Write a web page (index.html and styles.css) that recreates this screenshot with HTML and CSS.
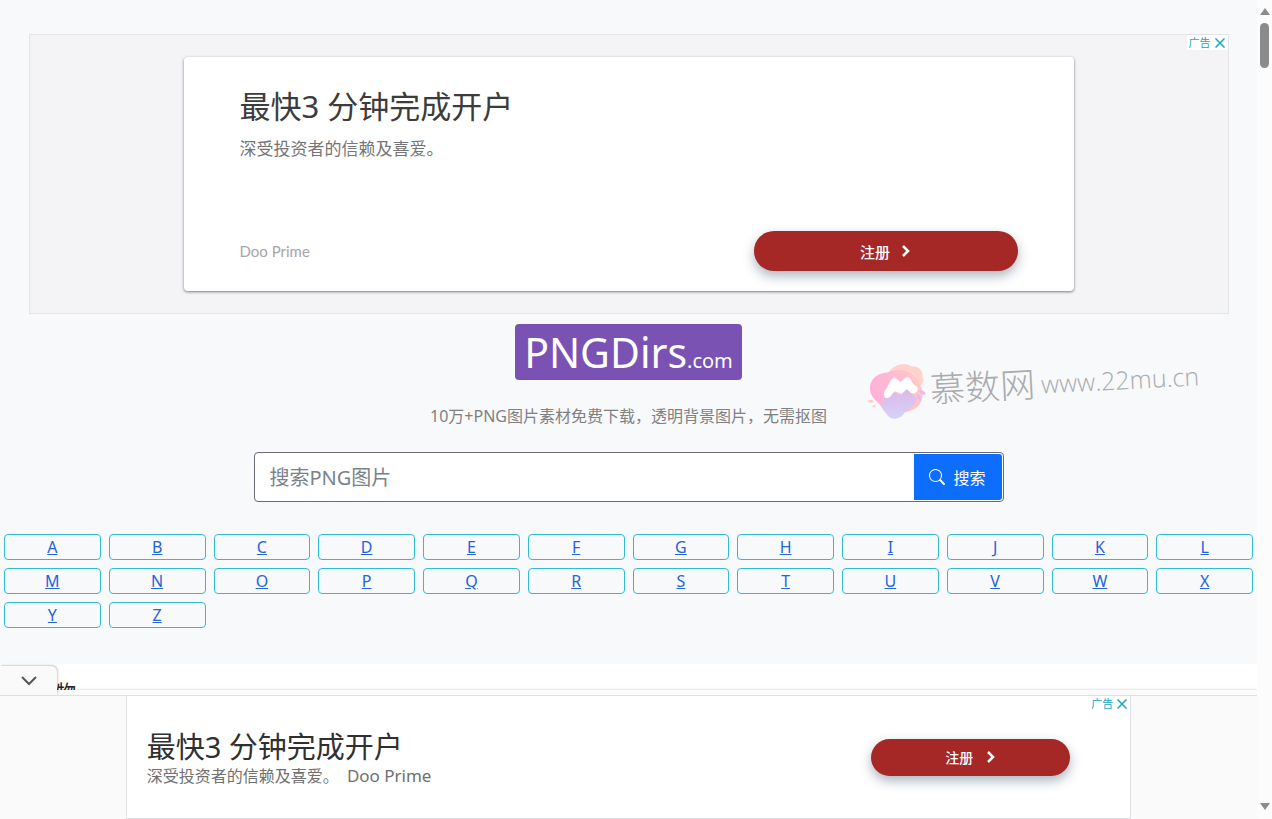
FILE: index.html
```html
<!DOCTYPE html>
<html lang="zh-CN">

<head>
  <meta charset="UTF-8" />
  <meta name="viewport" content="width=device-width, initial-scale=1.0" />
  <title>PNGDirs.com</title>
  <link rel="stylesheet" href="styles.css">
</head>

<body>
  <div class="page">
    <main class="hero">
      <section class="ad">
        <div class="ad-mark">
          <a href="#">广告</a>
          <button class="ad-close" type="button" aria-label="关闭">
            <svg viewBox="0 0 10 10" width="10" height="10"><path d="M.5 .5l9 9M9.5 .5l-9 9" /></svg>
          </button>
        </div>
        <div class="ad-card">
          <h2 class="ad-title">最快3 分钟完成开户</h2>
          <p class="ad-text">深受投资者的信赖及喜爱。</p>
          <div class="ad-foot">
            <span class="ad-brand">Doo Prime</span>
            <button class="cta" type="button">注册
              <svg viewBox="0 0 10 12" width="10" height="12"><path d="M2 1l5 5-5 5" /></svg>
            </button>
          </div>
        </div>
      </section>

      <h1 class="logo">PNGDirs<small>.com</small></h1>
      <p class="tagline">10万+PNG图片素材免费下载，透明背景图片，无需抠图</p>

      <form class="search">
        <input class="search-input" type="text" placeholder="搜索PNG图片" aria-label="搜索PNG图片">
        <button class="search-button" type="submit">
          <svg viewBox="0 0 16 16" width="16" height="16" fill="currentColor">
            <path d="M11.742 10.344a6.5 6.5 0 1 0-1.397 1.398h-.001c.03.04.062.078.098.115l3.85 3.85a1 1 0 0 0 1.415-1.414l-3.85-3.85a1.007 1.007 0 0 0-.115-.1zM12 6.5a5.5 5.5 0 1 1-11 0 5.5 5.5 0 0 1 11 0z" />
          </svg>
          搜索
        </button>
      </form>

      <nav class="letters">
        <div class="letter"><a href="#">A</a></div>
        <div class="letter"><a href="#">B</a></div>
        <div class="letter"><a href="#">C</a></div>
        <div class="letter"><a href="#">D</a></div>
        <div class="letter"><a href="#">E</a></div>
        <div class="letter"><a href="#">F</a></div>
        <div class="letter"><a href="#">G</a></div>
        <div class="letter"><a href="#">H</a></div>
        <div class="letter"><a href="#">I</a></div>
        <div class="letter"><a href="#">J</a></div>
        <div class="letter"><a href="#">K</a></div>
        <div class="letter"><a href="#">L</a></div>
        <div class="letter"><a href="#">M</a></div>
        <div class="letter"><a href="#">N</a></div>
        <div class="letter"><a href="#">O</a></div>
        <div class="letter"><a href="#">P</a></div>
        <div class="letter"><a href="#">Q</a></div>
        <div class="letter"><a href="#">R</a></div>
        <div class="letter"><a href="#">S</a></div>
        <div class="letter"><a href="#">T</a></div>
        <div class="letter"><a href="#">U</a></div>
        <div class="letter"><a href="#">V</a></div>
        <div class="letter"><a href="#">W</a></div>
        <div class="letter"><a href="#">X</a></div>
        <div class="letter"><a href="#">Y</a></div>
        <div class="letter"><a href="#">Z</a></div>
      </nav>

      <div class="watermark">
        <svg viewBox="0 0 60 56" width="60" height="56">
          <defs>
            <linearGradient id="blob" x1="0" y1="0" x2="1" y2="0">
              <stop offset="0" stop-color="#ffb0da" />
              <stop offset="1" stop-color="#ffc9c6" />
            </linearGradient>
            <linearGradient id="wave" x1="0" y1="0" x2="0" y2="1">
              <stop offset="0" stop-color="#dcb8e6" />
              <stop offset="1" stop-color="#d5d2fa" />
            </linearGradient>
          </defs>
          <path fill="#ffd3cc" d="M24 8C30 1 41-1 46 4c8 0 12 5 11 11 2 6-1 9-5 9L24 18z" />
          <path fill="url(#blob)" d="M5 30C1 18 10 9 22 9c10-4 22-2 27 6 9 8 10 23 1 30-8 6-28 8-34 1-2-6-8-9-11-16z" />
          <path fill="url(#wave)" d="M18 34l8-6 6 4 8-6 10 10c-1 8-7 8-12 13-5 8-15 9-19 1-4-4-6-11-1-16z" />
          <path fill="#fff" d="M19 34c-3-3-1-6 2-10 3-5 6-11 9-9l5 4 5-4c5-2 5 4 9 8 5 3 2 7-1 8-5 1-5-5-8-4l-5 4-6-3c-4 2-5 8-10 6z" />
          <path fill="#eeb8ed" d="M53 28c4 0 7 3 6 5-3 0-6-2-6-5zM51 32c3 1 4 4 3 7-3-1-5-4-3-7z" />
          <path fill="#ffccc4" d="M1 36c3-1 6 0 6 1-1 2-5 2-6-1zM5 42l4-2c0 3-3 4-4 2z" />
        </svg>
        <span class="watermark-name">慕数网</span>
        <span class="watermark-url">www.22mu.cn</span>
      </div>
    </main>

    <section class="category">
      <h3>物</h3>
    </section>

    <aside class="dock">
      <button class="dock-toggle" type="button" aria-label="收起">
        <svg viewBox="0 0 16 10" width="16" height="10"><path d="M1 1l7 7 7-7" /></svg>
      </button>
      <div class="dock-ad">
        <div class="ad-mark">
          <a href="#">广告</a>
          <button class="ad-close" type="button" aria-label="关闭">
            <svg viewBox="0 0 10 10" width="10" height="10"><path d="M.5 .5l9 9M9.5 .5l-9 9" /></svg>
          </button>
        </div>
        <div>
          <h2 class="dock-title">最快3 分钟完成开户</h2>
          <p class="dock-text">深受投资者的信赖及喜爱。 <span>Doo Prime</span></p>
        </div>
        <button class="cta cta-small" type="button">注册
          <svg viewBox="0 0 10 12" width="10" height="12"><path d="M2 1l5 5-5 5" /></svg>
        </button>
      </div>
    </aside>
  </div>

  <div class="scrollbar">
    <svg viewBox="0 0 10 8" width="10" height="8"><path d="M5 0l5 7H0z" /></svg>
    <div class="scrollbar-thumb"></div>
    <svg class="scrollbar-down" viewBox="0 0 10 8" width="10" height="8"><path d="M0 0h10L5 7z" /></svg>
  </div>
</body>

</html>
```

FILE: styles.css
```css
* {
  box-sizing: border-box;
}

body {
  margin: 0;
  height: 100vh;
  overflow: hidden;
  display: flex;
  font-family: "Noto Sans", "Noto Sans CJK SC", sans-serif;
  font-size: 16px;
  line-height: 24px;
  color: #212529;
  background: #fff;
}

h1,
h2,
h3,
p {
  margin: 0;
  font-weight: 400;
}

button {
  font-family: inherit;
  border: 0;
  padding: 0;
  cursor: pointer;
}

.page {
  flex: 1;
  min-width: 0;
  position: relative;
  overflow: hidden;
}

.hero {
  position: relative;
  display: flex;
  flex-direction: column;
  align-items: center;
  padding: 34px 0 32px;
  background: #f8f9fb;
}

/* top ad */
.ad {
  position: relative;
  width: calc(100% - 32px);
  max-width: 1200px;
  padding: 22px 0;
  border: 1px solid #e4e5e8;
  background: #f4f4f6;
}

.ad-card {
  max-width: 890px;
  margin: 0 auto;
  padding: 28px 56px 20px;
  border-radius: 4px;
  background: #fff;
  box-shadow: 0 1px 3px rgba(0, 0, 0, 0.5);
}

.ad-title {
  font-size: 31px;
  line-height: 42px;
  color: #3c3c3c;
}

.ad-text {
  margin-top: 10px;
  font-size: 17px;
  color: #757575;
}

.ad-foot {
  display: flex;
  align-items: center;
  justify-content: space-between;
  margin-top: 70px;
}

.ad-brand {
  font-family: Lato, sans-serif;
  font-size: 15px;
  line-height: 20px;
  color: #a5a5a5;
}

.ad-mark {
  position: absolute;
  top: 0;
  right: 0;
  display: flex;
  align-items: center;
  gap: 4px;
  padding: 0 3px 0 2px;
  height: 15px;
  background: #fff;
}

.ad-mark a {
  font-size: 11px;
  line-height: 15px;
  color: #17a6c4;
  text-decoration: none;
}

.ad-close {
  display: flex;
  background: none;
}

.ad-close svg {
  fill: none;
  stroke: #17a6c4;
  stroke-width: 1.5;
}

.cta {
  display: flex;
  align-items: center;
  justify-content: center;
  gap: 11px;
  width: 264px;
  height: 40px;
  border-radius: 20px;
  background: #a52826;
  color: #fff;
  font-size: 15px;
  font-weight: 500;
  box-shadow: 0 5px 12px rgba(50, 70, 100, 0.4);
}

.cta svg {
  fill: none;
  stroke: #fff;
  stroke-width: 2.5;
}

.cta-small {
  gap: 13px;
  width: 199px;
  height: 37px;
  font-size: 14px;
}

/* logo and search */
.logo {
  margin-top: 10px;
  padding: 0 9px;
  border-radius: 4px;
  background: #7952b3;
  color: #fff;
  font-size: 41px;
  line-height: 56px;
}

.logo small {
  font-size: 20px;
  line-height: 1;
}

.tagline {
  margin-top: 24px;
  color: #808080;
}

.search {
  display: flex;
  width: calc(100% - 32px);
  max-width: 750px;
  height: 50px;
  margin-top: 24px;
  padding: 1px;
  border: 1px solid #6c6c78;
  border-radius: 4px;
  background: #fff;
}

.search-input {
  flex: 1;
  min-width: 0;
  padding: 0 14px;
  border: 0;
  outline: 0;
  background: none;
  font-family: inherit;
  font-size: 20px;
}

.search-input::placeholder {
  color: #7a828a;
  opacity: 1;
}

.search-button {
  display: flex;
  align-items: center;
  gap: 8px;
  padding: 0 16px 0 15px;
  border-radius: 0 3px 3px 0;
  background: #0d6efd;
  color: #fff;
  font-size: 16px;
}

.letters {
  display: grid;
  grid-template-columns: repeat(12, 1fr);
  gap: 8px;
  width: 100%;
  margin-top: 32px;
  padding: 0 4px 4px;
}

.letter {
  border: 1px solid #2fbcd3;
  border-radius: 4px;
  text-align: center;
}

.letter a {
  color: #2563d9;
}

.watermark {
  position: absolute;
  top: 356px;
  right: 58px;
  display: flex;
  align-items: center;
  color: #a9abae;
  white-space: nowrap;
  transform: rotate(-3deg);
}

.watermark-name {
  margin: 0 6px 0 4px;
  font-size: 35px;
  font-weight: 300;
}

.watermark-url {
  font-family: "Open Sans", sans-serif;
  font-size: 25px;
  font-weight: 300;
}

.category {
  padding: 17px 56px;
}

.category h3 {
  font-size: 20px;
}

/* ad docked at the bottom of the window */
.dock {
  position: absolute;
  left: 0;
  right: 0;
  bottom: 0;
  padding-top: 5px;
  background: #fafafa;
  box-shadow: 0 0 3px rgba(0, 0, 0, 0.2);
}

.dock::before {
  content: "";
  display: block;
  border-top: 1px solid #e0e0e0;
}

.dock-toggle {
  position: absolute;
  left: 0;
  top: -24px;
  display: flex;
  align-items: center;
  justify-content: center;
  width: 57px;
  height: 29px;
  border-radius: 0 6px 0 0;
  background: #fafafa;
  box-shadow: 1px -1px 2px rgba(0, 0, 0, 0.2);
}

.dock-toggle svg {
  fill: none;
  stroke: #555;
  stroke-width: 2;
}

.dock-ad {
  position: relative;
  display: flex;
  align-items: center;
  justify-content: space-between;
  width: 80%;
  height: 123px;
  margin: 0 auto;
  padding: 0 60px 0 20px;
  border: 1px solid #dfe1e5;
  border-top: 0;
  background: #fff;
}

.dock-title {
  padding-top: 4px;
  font-size: 29px;
  line-height: 34px;
  color: #303030;
}

.dock-text {
  color: #707070;
}

.dock-text span {
  margin-left: 4px;
  font-size: 17px;
}

.scrollbar {
  display: flex;
  flex-direction: column;
  align-items: center;
  width: 15px;
  padding: 8px 0;
  background: #fcfcfc;
}

.scrollbar svg {
  fill: #8b8b8b;
}

.scrollbar-thumb {
  width: 9px;
  height: 45px;
  margin-top: 7px;
  border-radius: 5px;
  background: #8b8b8b;
}

.scrollbar-down {
  margin-top: auto;
}
```
